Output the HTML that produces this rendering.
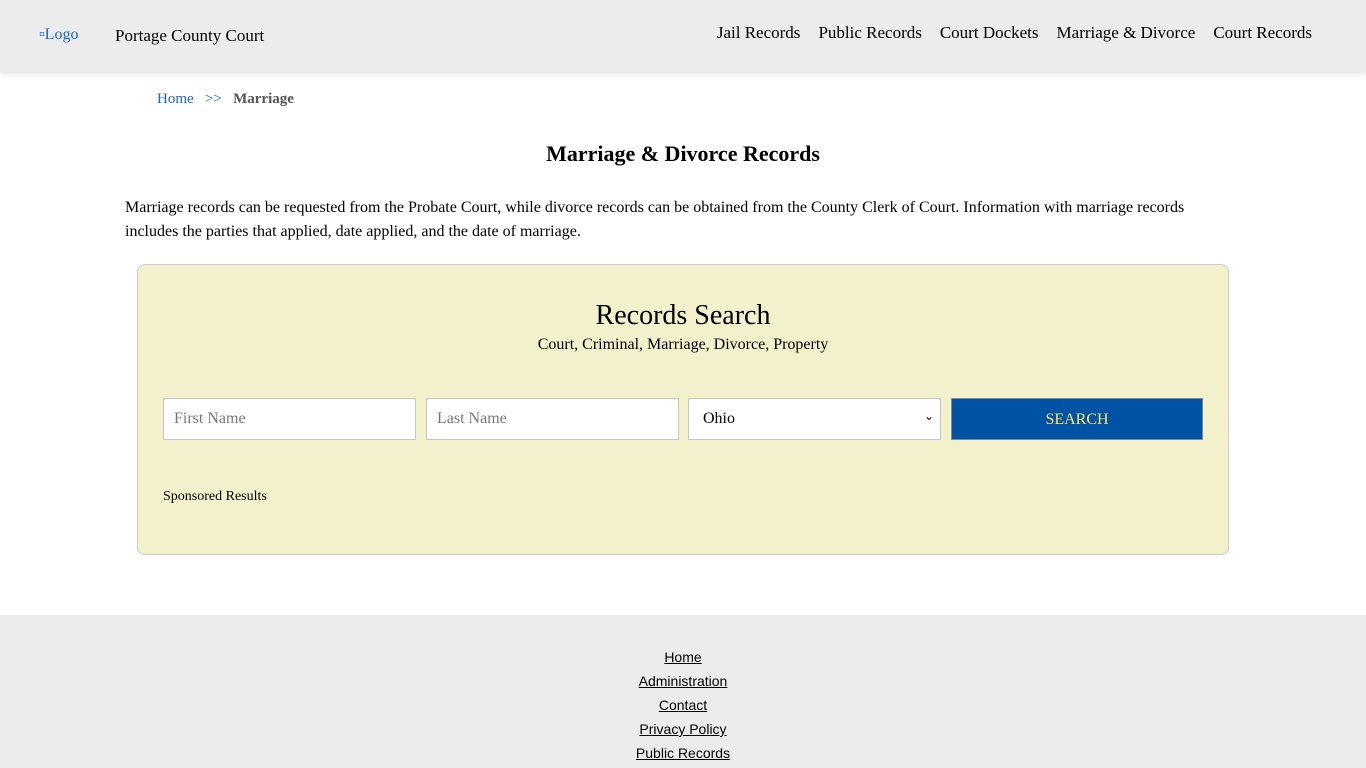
<!DOCTYPE html>
<html><head><meta charset="utf-8"><style>
*{box-sizing:border-box}
body{margin:0;font-family:"Liberation Serif",serif;background:#fff;color:#000}
.hdr{height:72px;background:#ececec;box-shadow:0 2px 6px rgba(0,0,0,.12);position:relative}
.logo{position:absolute;left:39px;top:26px;color:#1a63c8;font-size:16px}
.site{position:absolute;left:115px;top:26px;font-size:17px}
.nav{position:absolute;right:54px;top:23px;font-size:17px}
.nav span{margin-left:18px}
.bc{position:absolute;left:157px;top:90px;font-size:15px;word-spacing:0}
.bc a{color:#1a63c8}
.bc b{color:#555}
h1{position:absolute;left:0;width:1366px;top:141px;margin:0;text-align:center;font-size:22px}
.intro{position:absolute;left:125px;top:196px;width:1090px;font-size:16px;line-height:24px;margin:0}
.box{position:absolute;left:137px;top:264px;width:1092px;height:291px;background:#f3f0cc;border:1px solid #ccc;border-radius:8px}
.rs{position:absolute;top:35px;width:100%;text-align:center;font-size:28px}
.sub{position:absolute;top:71px;width:100%;text-align:center;font-size:16px}
.in{position:absolute;top:133px;height:42px;width:253px;background:#fff;border:1px solid #c9c6bc;font-size:16px;color:#777;padding:11px 10px}
.btn{position:absolute;top:133px;left:813px;width:252px;height:42px;background:#0052a4;color:#ffe36b;font-size:16px;text-align:center;line-height:42px;border:1px solid #7a8a9a}
.sp{position:absolute;left:25px;top:224px;font-size:14px}
.ft{position:absolute;top:615px;left:0;width:1366px;height:153px;background:#ececec;text-align:center;font-family:"Liberation Sans",sans-serif;font-size:14px}
.ft div{height:24px;line-height:24px;text-decoration:underline}
</style></head><body>
<div class="hdr"><span class="logo">▫Logo</span><span class="site">Portage County Court</span>
<div class="nav"><span>Jail Records</span><span>Public Records</span><span>Court Dockets</span><span>Marriage &amp; Divorce</span><span>Court Records</span></div></div>
<div class="bc" style="top:91px"><a>Home</a>&nbsp;&nbsp;&nbsp;<a>&gt;&gt;</a>&nbsp;&nbsp;&nbsp;<b>Marriage</b></div>
<h1>Marriage &amp; Divorce Records</h1>
<p class="intro">Marriage records can be requested from the Probate Court, while divorce records can be obtained from the County Clerk of Court. Information with marriage records includes the parties that applied, date applied, and the date of marriage.</p>
<div class="box">
<div class="rs">Records Search</div>
<div class="sub">Court, Criminal, Marriage, Divorce, Property</div>
<div class="in" style="left:25px">First Name</div>
<div class="in" style="left:288px">Last Name</div>
<div class="in" style="left:550px;color:#000;padding-left:14px">Ohio<span style="position:absolute;right:6px;top:10px;font-size:12px">⌄</span></div>
<div class="btn">SEARCH</div>
<div class="sp">Sponsored Results</div>
</div>
<div class="ft"><div style="margin-top:30px">Home</div><div>Administration</div><div>Contact</div><div>Privacy Policy</div><div>Public Records</div></div>
</body></html>
